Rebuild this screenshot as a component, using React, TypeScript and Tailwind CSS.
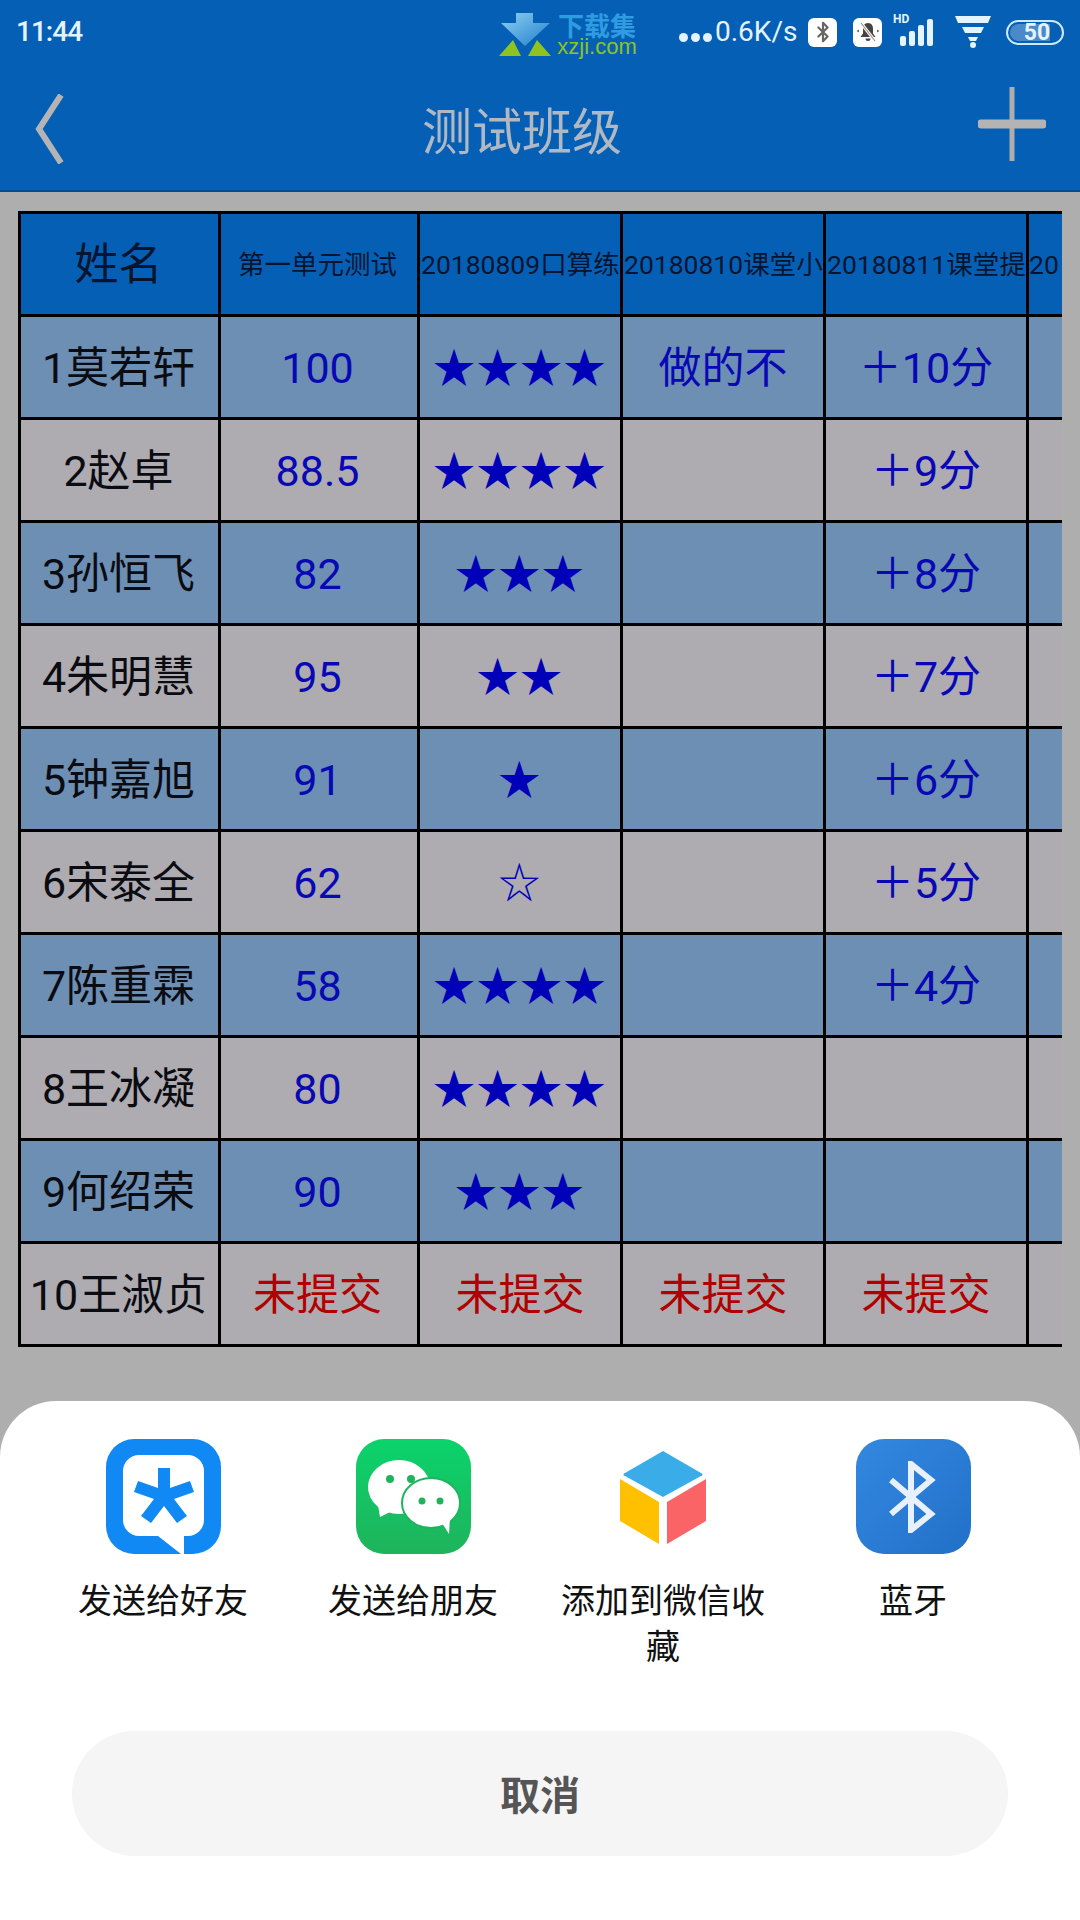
import { Bluetooth } from 'lucide-react';

const cjk = "font-['Roboto','Noto_Sans_CJK_SC',sans-serif]";

const rows = [
  { name: '1莫若轩', score: '100', stars: '★★★★', note: '做的不', bonus: '＋10分' },
  { name: '2赵卓', score: '88.5', stars: '★★★★', note: '', bonus: '＋9分' },
  { name: '3孙恒飞', score: '82', stars: '★★★', note: '', bonus: '＋8分' },
  { name: '4朱明慧', score: '95', stars: '★★', note: '', bonus: '＋7分' },
  { name: '5钟嘉旭', score: '91', stars: '★', note: '', bonus: '＋6分' },
  { name: '6宋泰全', score: '62', stars: '☆', note: '', bonus: '＋5分' },
  { name: '7陈重霖', score: '58', stars: '★★★★', note: '', bonus: '＋4分' },
  { name: '8王冰凝', score: '80', stars: '★★★★', note: '', bonus: '' },
  { name: '9何绍荣', score: '90', stars: '★★★', note: '', bonus: '' },
];

const gridCols = 'grid grid-cols-[200px_199px_203px_203px_203px_33px]';
const cell = 'h-[103px] pt-[2px] border-r-[3px] border-b-[3px] border-black flex items-center justify-center overflow-hidden whitespace-nowrap';
const headCell = 'h-[103px] pt-[2px] border-r-[3px] border-b-[3px] border-black flex items-center overflow-hidden whitespace-nowrap text-[26.5px] text-[#051530] pl-[1px]';

const StatusBar = () => (
  <div className="h-[64px] flex items-center bg-[#0560b5] pl-[16px] text-[#e4f3ff]">
    <span className="text-[28px] font-medium font-['Roboto',sans-serif] w-[66px] tracking-[-1px]">11:44</span>
    {/* watermark logo */}
    <svg width="54" height="44" viewBox="0 0 54 44" className="ml-[417px] mt-[6px]">
      <defs>
        <linearGradient id="arrow" x1="0" y1="0" x2="1" y2="1">
          <stop offset="0" stopColor="#8fd0f4" />
          <stop offset="1" stopColor="#1f7fcb" />
        </linearGradient>
      </defs>
      <path d="M17 0h17v10h17L26 33 2 10h15z" fill="url(#arrow)" />
      <path d="M0 43 L14 27 L22 43z M29 43 L38 27 L52 43z" fill="#8fc31f" />
    </svg>
    <div className="ml-[4px] w-[80px] flex flex-col items-center font-['Liberation_Sans','Noto_Sans_CJK_SC',sans-serif] mt-[4px]">
      <span className="text-[26px] leading-[25px] text-[#2f9be0] font-bold font-['Noto_Sans_CJK_SC',sans-serif]">下载集</span>
      <span className="text-[22px] leading-[20px] text-[#8fc31f]">xzji.com</span>
    </div>
    {/* network speed */}
    <div className="ml-[42px] flex gap-[3px] mt-[10px]">
      <span className="w-[9px] h-[9px] rounded-full bg-[#e4f3ff]" />
      <span className="w-[9px] h-[9px] rounded-full bg-[#e4f3ff]" />
      <span className="w-[9px] h-[9px] rounded-full bg-[#e4f3ff]" />
    </div>
    <span className="ml-[3px] text-[28px] font-['Roboto',sans-serif] w-[88px] whitespace-nowrap">0.6K/s</span>
    <div className="ml-[5px] w-[29px] h-[29px] rounded-[6px] bg-white flex items-center justify-center">
      <Bluetooth size={22} strokeWidth={2.4} color="#666" />
    </div>
    <div className="ml-[16px] w-[29px] h-[29px] rounded-[6px] bg-white flex items-center justify-center">
      <svg width="26" height="26" viewBox="0 0 26 26">
        <path d="M13 4c-3.500 0-5 2.800-5 5.500v5L5.500 18h15L18 14.500v-5C18 6.800 16.500 4 13 4z" fill="#444" />
        <path d="M10.500 19.500a2.500 2.500 0 0 0 5 0z" fill="#444" />
        <path d="M6 4l14 18" stroke="#fff" strokeWidth="3" />
        <path d="M6 4l14 18" stroke="#a88" strokeWidth="1.200" />
        <path d="M1.500 12l2.500-1.500v3zM24.500 12L22 10.500v3z" fill="#666" />
      </svg>
    </div>
    <svg width="44" height="33" viewBox="0 0 44 33" className="ml-[11px] mb-[3px]">
      <text x="0" y="9" fontSize="12" fontWeight="700" fontFamily="Roboto" fill="#e4f3ff">HD</text>
      <rect x="7" y="22" width="6" height="10" rx="2" fill="#e4f3ff" />
      <rect x="16" y="17" width="6" height="15" rx="2" fill="#e4f3ff" />
      <rect x="25" y="11" width="6" height="21" rx="2" fill="#e4f3ff" />
      <rect x="34" y="5" width="6" height="27" rx="2" fill="#e4f3ff" />
    </svg>
    <svg width="36" height="32" viewBox="0 0 36 32" className="ml-[18px]">
      <path d="M0 0h36l-3 7H3z" fill="#e4f3ff" />
      <path d="M7 11h22l-3 6H10z" fill="#e4f3ff" />
      <path d="M13 21h10l-2 4h-6z" fill="#e4f3ff" />
      <circle cx="18" cy="29" r="3" fill="#e4f3ff" />
    </svg>
    <div className="ml-[15px] w-[58px] h-[25px] rounded-full border-[2px] border-[#cfe9fb] p-[2px] flex">
      <div className="w-[40px] h-full rounded-l-full bg-[#4a8ac8] flex items-center justify-center text-[23px] font-bold font-['Roboto',sans-serif] leading-none">
        <span className="ml-[14px]">50</span>
      </div>
    </div>
  </div>
);

const TitleBar = () => (
  <div className="h-[128px] flex items-center bg-[#0560b5] border-b-[2px] border-[#0b4a85] pl-[34px] pr-[34px]">
    <svg width="30" height="70" viewBox="0 0 30 70" className="mt-[4px]">
      <path d="M27 1 L5 35 L27 69" fill="none" stroke="#b4b4b4" strokeWidth="6" />
    </svg>
    <span className="ml-[358px] mt-[2px] text-[50px] leading-none text-[#b0b8c4] font-['Noto_Sans_CJK_SC',sans-serif]">测试班级</span>
    <svg width="68" height="74" viewBox="0 0 68 74" className="ml-auto mb-[6px]">
      <path d="M34 0v74" stroke="#adadad" strokeWidth="5" />
      <path d="M3 37h62" stroke="#b4b4b4" strokeWidth="9" strokeLinecap="round" />
    </svg>
  </div>
);

const ScoreTable = () => (
  <div className={`ml-[18px] mt-[19px] w-[1044px] border-l-[3px] border-t-[3px] border-black ${cjk}`}>
    <div className={`${gridCols} bg-[#0560b5]`}>
      <div className={`${cell} text-[44px] pr-[2px] text-[#051530]`}>姓名</div>
      <div className={`${cell} text-[26.5px] pr-[3px] text-[#051530]`}>第一单元测试</div>
      <div className={headCell}>20180809口算练习</div>
      <div className={headCell}>20180810课堂小测</div>
      <div className={headCell}>20180811课堂提问</div>
      <div className="h-[103px] pt-[2px] border-b-[3px] border-black overflow-hidden whitespace-nowrap flex items-center text-[26.5px] text-[#051530]">20</div>
    </div>
    {rows.map((row, i) => (
      <div key={row.name} className={`${gridCols} ${i % 2 === 0 ? 'bg-[#6d8fb4]' : 'bg-[#aeacb0]'}`}>
        <div className={`${cell} text-[43px] pr-[2px] text-[#0b0b12]`}>{row.name}</div>
        <div className={`${cell} text-[43px] pr-[3px] text-[#0808b4]`}>{row.score}</div>
        <div className={`${cell} text-[42px] text-[#0000b8] tracking-[1.5px]`}>{row.stars}</div>
        <div className={`${cell} text-[43px] text-[#0808b4]`}>{row.note}</div>
        <div className={`${cell} text-[43px] text-[#0808b4]`}>{row.bonus}</div>
        <div className="h-[103px] border-b-[3px] border-black" />
      </div>
    ))}
    <div className={`${gridCols} bg-[#aeacb0]`}>
      <div className={`${cell} text-[43px] pr-[2px] text-[#0b0b12]`}>10王淑贞</div>
      <div className={`${cell} text-[43px] pr-[3px] text-[#b00000]`}>未提交</div>
      <div className={`${cell} text-[43px] text-[#b00000]`}>未提交</div>
      <div className={`${cell} text-[43px] text-[#b00000]`}>未提交</div>
      <div className={`${cell} text-[43px] text-[#b00000]`}>未提交</div>
      <div className="h-[103px] border-b-[3px] border-black" />
    </div>
  </div>
);

const TimIcon = () => (
  <svg width="115" height="115" viewBox="0 0 115 115">
    <rect width="115" height="115" rx="28" fill="#1089f5" />
    <path d="M33 16h49a16 16 0 0 1 16 16v49a16 16 0 0 1-16 16H78v18h-3L52 97H33a16 16 0 0 1-16-16V32a16 16 0 0 1 16-16z" fill="#fff" />
    <path d="M52 29h12v20l20-7 4 11-20 7 13 17-10 7-13-17-13 17-10-7 13-17-20-7 4-11 20 7z" fill="#1089f5" />
  </svg>
);

const WechatIcon = () => (
  <svg width="115" height="115" viewBox="0 0 115 115">
    <defs>
      <linearGradient id="wx" x1="0" y1="0" x2="0" y2="1">
        <stop offset="0" stopColor="#0bd36c" />
        <stop offset="1" stopColor="#1fb35c" />
      </linearGradient>
    </defs>
    <rect width="115" height="115" rx="28" fill="url(#wx)" />
    <ellipse cx="43" cy="48" rx="31" ry="27" fill="#fff" />
    <path d="M22 66l2 12 14-7z" fill="#fff" />
    <circle cx="34" cy="40" r="4" fill="#1fb35c" />
    <circle cx="55" cy="40" r="4" fill="#1fb35c" />
    <ellipse cx="75" cy="64" rx="29" ry="25" fill="#fff" stroke="#1fb35c" strokeWidth="2" />
    <path d="M86 84l7 11 1-16z" fill="#fff" />
    <circle cx="66" cy="62" r="3.500" fill="#1fb35c" />
    <circle cx="84" cy="62" r="3.500" fill="#1fb35c" />
  </svg>
);

const CubeIcon = () => (
  <svg width="115" height="115" viewBox="0 0 115 115">
    <path d="M57 12l38 22a1 1 0 0 1 0 3L57 58 19 37a1 1 0 0 1 0-3z" fill="#3aade9" />
    <path d="M14 40l39 23v42L14 82z" fill="#ffc000" />
    <path d="M100 40l-39 23v42l39-23z" fill="#fb6467" />
  </svg>
);

const BluetoothIcon = () => (
  <div className="w-[115px] h-[115px] rounded-[28px] bg-gradient-to-br from-[#3388e0] to-[#2270c8] flex items-center justify-center">
    <svg width="64" height="72" viewBox="0 0 64 72">
      <path d="M10 19 L50 53 L30 69 V3 L50 19 L10 53" fill="none" stroke="#e8f1fb" strokeWidth="6" />
    </svg>
  </div>
);

const shareItems = [
  { label: '发送给好友', icon: <TimIcon /> },
  { label: '发送给朋友', icon: <WechatIcon /> },
  { label: '添加到微信收藏', icon: <CubeIcon /> },
  { label: '蓝牙', icon: <BluetoothIcon /> },
];

const ShareSheet = () => (
  <div className="mt-auto h-[519px] bg-white rounded-t-[56px] pt-[38px] px-[38px] flex flex-col">
    <div className="grid grid-cols-[repeat(4,250px)] h-[292px]">
      {shareItems.map(item => (
        <div key={item.label} className="flex flex-col items-center">
          {item.icon}
          <span className="mt-[22px] w-[210px] text-center text-[34px] leading-[46px] text-[#111] font-['Noto_Sans_CJK_SC',sans-serif]">
            {item.label}
          </span>
        </div>
      ))}
    </div>
    <div className="mx-[34px] h-[125px] rounded-full bg-[#f5f5f5] flex items-center justify-center text-[40px] font-bold text-[#555] pb-[2px] font-['Noto_Sans_CJK_SC',sans-serif]">
      取消
    </div>
  </div>
);

const App = () => {
  return (
    <div className="w-[1080px] h-[1920px] bg-[#aeaeae] flex flex-col overflow-hidden">
      <StatusBar />
      <TitleBar />
      <ScoreTable />
      <ShareSheet />
    </div>
  );
};

export default App;
